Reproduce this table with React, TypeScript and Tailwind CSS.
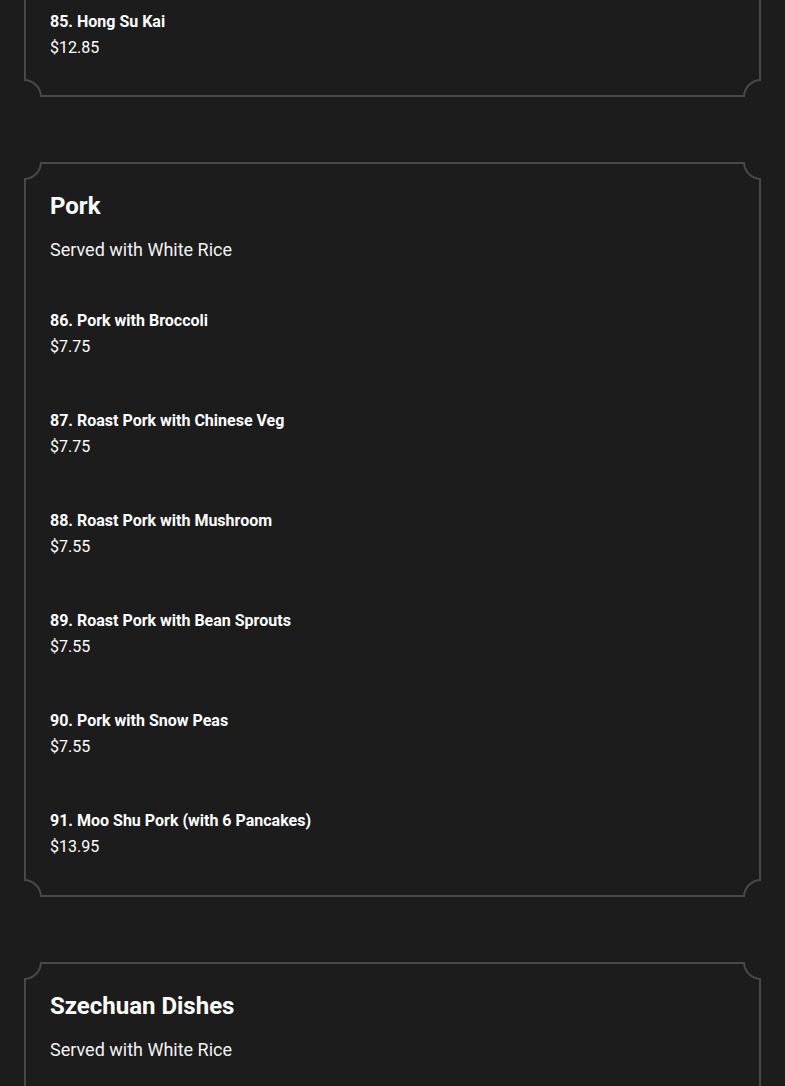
import React from 'react';

interface Item {
  name: string;
  price: string;
}

interface Section {
  title?: string;
  note?: string;
  items: Item[];
}

const pork: Section = {
  title: 'Pork',
  note: 'Served with White Rice',
  items: [
    { name: '86. Pork with Broccoli', price: '$7.75' },
    { name: '87. Roast Pork with Chinese Veg', price: '$7.75' },
    { name: '88. Roast Pork with Mushroom', price: '$7.55' },
    { name: '89. Roast Pork with Bean Sprouts', price: '$7.55' },
    { name: '90. Pork with Snow Peas', price: '$7.55' },
    { name: '91. Moo Shu Pork (with 6 Pancakes)', price: '$13.95' },
  ],
};

const szechuan: Section = {
  title: 'Szechuan Dishes',
  note: 'Served with White Rice',
  items: [],
};

const Corner: React.FC<{ pos: string }> = ({ pos }) => (
  <span
    className={`absolute w-[36px] h-[36px] rounded-full border-2 border-[#484848] bg-[#1c1c1c] ${pos}`}
  />
);

const Card: React.FC<{ section: Section; className?: string }> = ({ section, className = '' }) => (
  <div className={`relative border-2 border-[#484848] px-6 [clip-path:inset(0)] ${className}`}>
    <Corner pos="-left-[20px] -top-[20px]" />
    <Corner pos="-right-[20px] -top-[20px]" />
    <Corner pos="-left-[20px] -bottom-[20px]" />
    <Corner pos="-right-[20px] -bottom-[20px]" />
    {section.title && (
      <div className="relative pt-[26px]">
        <h2 className="text-[24px] leading-[32px] font-bold text-white">{section.title}</h2>
        <p className="mt-[14px] text-[18px] leading-[28px] text-[#f2f2f2]">{section.note}</p>
      </div>
    )}
    {section.items.length > 0 && (
      <div className={`relative flex flex-col gap-[50px] ${section.title ? 'mt-[45px]' : ''}`}>
        {section.items.map((it) => (
          <div key={it.name} className="flex flex-col gap-[2px]">
            <span className="text-[16px] leading-[24px] font-bold text-white">{it.name}</span>
            <span className="text-[16px] leading-[24px] text-white">{it.price}</span>
          </div>
        ))}
      </div>
    )}
  </div>
);

export default function App() {
  return (
    <div
      className="h-[1086px] bg-[#1c1c1c] px-6 overflow-hidden"
      style={{ fontFamily: 'Roboto, "Liberation Sans", sans-serif' }}
    >
      <div className="flex flex-col gap-[65px]">
        <Card
          className="mt-[-60px] pt-[68px] pb-[35px]"
          section={{ items: [{ name: '85. Hong Su Kai', price: '$12.85' }] }}
        />
        <Card className="pb-[36px]" section={pork} />
        <Card className="pb-[200px]" section={szechuan} />
      </div>
    </div>
  );
}
